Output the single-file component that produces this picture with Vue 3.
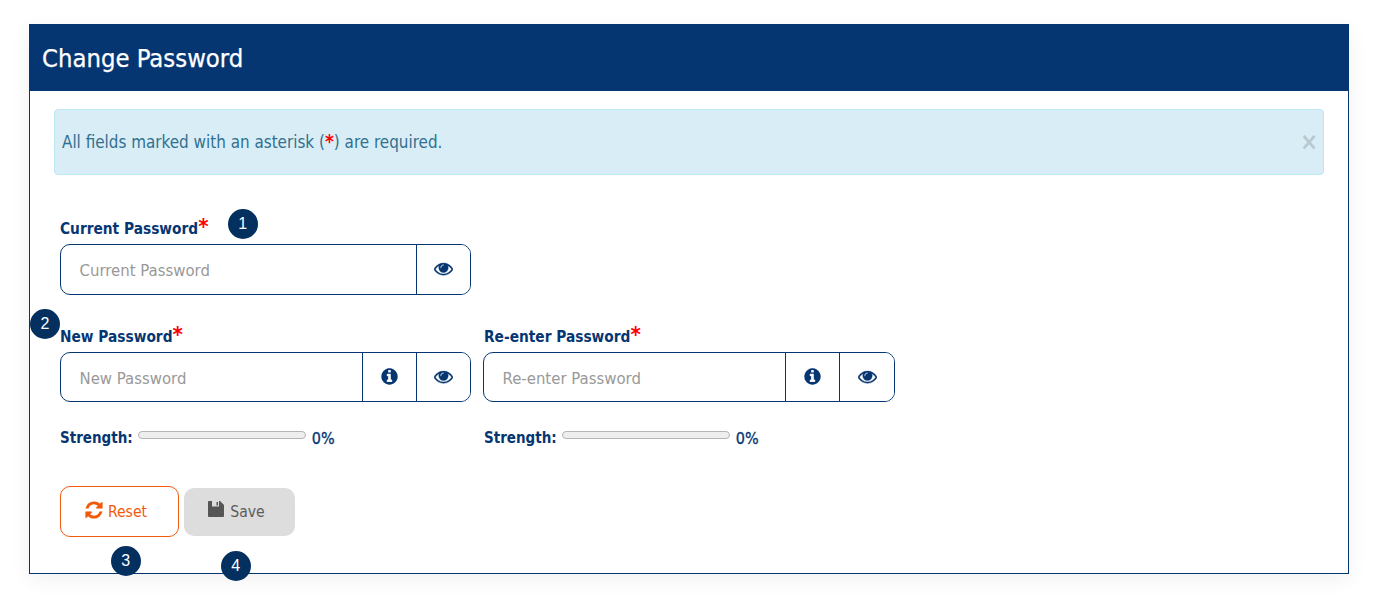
<script setup>
const eye = 'M1664 960q-152-236-381-353 61 104 61 225 0 185-131.5 316.5t-316.5 131.5-316.5-131.5-131.5-316.5q0-121 61-225-229 117-381 353 133 205 333.5 326.5t434.5 121.5 434.5-121.5 333.5-326.5zm-720-384q0-20-14-34t-34-14q-125 0-214.5 89.5t-89.5 214.5q0 20 14 34t34 14 34-14 14-34q0-86 61-147t147-61q20 0 34-14t14-34zm848 384q0 34-20 69-140 230-376.5 368.5t-499.5 138.5-499.5-139-376.5-368q-20-35-20-69t20-69q140-229 376.5-368t499.5-139 499.5 139 376.5 368q20 35 20 69z'
const info = 'M1152 1376v-160q0-14-9-23t-23-9h-96v-512q0-14-9-23t-23-9h-320q-14 0-23 9t-9 23v160q0 14 9 23t23 9h96v320h-96q-14 0-23 9t-9 23v160q0 14 9 23t23 9h448q14 0 23-9t9-23zm-128-896v-160q0-14-9-23t-23-9h-192q-14 0-23 9t-9 23v160q0 14 9 23t23 9h192q14 0 23-9t9-23zm640 416q0 209-103 385.5t-279.5 279.5-385.5 103-385.5-103-279.5-279.5-103-385.5 103-385.5 279.5-279.5 385.5-103 385.5 103 279.5 279.5 103 385.5z'
const refresh = 'M1639 1056q0 5-1 7-64 268-268 434.5t-478 166.5q-146 0-282.5-55t-243.5-157l-129 129q-19 19-45 19t-45-19-19-45v-448q0-26 19-45t45-19h448q26 0 45 19t19 45-19 45l-137 137q71 66 161 102t187 36q134 0 250-65t186-179q11-17 53-117 8-23 30-23h192q13 0 22.5 9.5t9.5 22.5zm25-800v448q0 26-19 45t-45 19h-448q-26 0-45-19t-19-45 19-45l138-138q-148-137-349-137-134 0-250 65t-186 179q-11 17-53 117-8 23-30 23h-199q-13 0-22.5-9.5t-9.5-22.5v-7q65-268 270-434.5t480-166.5q146 0 284 55.5t245 156.5l130-129q19-19 45-19t45 19 19 45z'
const floppy = 'M1 0h11l4 4v11a1 1 0 0 1-1 1H1a1 1 0 0 1-1-1V1a1 1 0 0 1 1-1zM4 0v5.500h7V0zM8.500 1v3.500H10V1z'
const pair = [
  { label: 'New Password', placeholder: 'New Password' },
  { label: 'Re-enter Password', placeholder: 'Re-enter Password' }
]
</script>

<template>
  <div class="page">
    <section class="card">
      <header class="head"><h1>Change Password</h1></header>
      <div class="body">
        <div class="alert">
          <span>All fields marked with an asterisk (<b class="req">*</b>) are required.</span>
          <span class="close">×</span>
        </div>
        <form class="form" @submit.prevent>
          <div class="field single">
            <label>Current Password<b class="req">*</b></label>
            <div class="group tall">
              <input type="password" placeholder="Current Password" />
              <button type="button" class="addon eye"><svg viewBox="0 0 1792 1792"><path :d="eye" /></svg></button>
            </div>
            <span class="badge b1">1</span>
          </div>
          <div class="pair">
            <div v-for="f in pair" :key="f.label" class="field">
              <label>{{ f.label }}<b class="req">*</b></label>
              <div class="group">
                <input type="password" :placeholder="f.placeholder" />
                <button type="button" class="addon info"><svg viewBox="0 0 1792 1792"><path :d="info" /></svg></button>
                <button type="button" class="addon eye"><svg viewBox="0 0 1792 1792"><path :d="eye" /></svg></button>
              </div>
              <div class="strength">
                <span>Strength:</span>
                <span class="bar"></span>
                <span class="pct">0%</span>
              </div>
            </div>
            <span class="badge b2">2</span>
          </div>
          <div class="actions">
            <button type="button" class="btn reset"><svg viewBox="0 0 1792 1792"><path :d="refresh" /></svg>Reset</button>
            <button type="button" class="btn save"><svg viewBox="0 0 16 16"><path :d="floppy" fill-rule="evenodd" /></svg>Save</button>
            <span class="badge b3">3</span>
            <span class="badge b4">4</span>
          </div>
        </form>
      </div>
    </section>
  </div>
</template>

<style>
html, body { margin: 0; background: #fff; }
</style>

<style scoped>
.page {
  padding: 24px 42px 36px 29px;
  font-family: "DejaVu Sans Condensed", "DejaVu Sans", sans-serif;
}
.card {
  position: relative;
  height: 550px;
  box-sizing: border-box;
  border: 1px solid #063672;
  background: #fff;
  box-shadow: 0 6px 20px rgba(0, 0, 0, .06);
}
.head {
  margin: -1px -1px 0;
  height: 67px;
  box-sizing: border-box;
  display: flex;
  align-items: center;
  padding: 0 0 0 13px;
  background: #063672;
}
.head h1 {
  margin: 0;
  font-size: 25.4px;
  font-weight: 400;
  color: #fff;
  -webkit-text-stroke: .25px #fff;
}
.body { padding: 18px 24px 0; }
.alert {
  height: 66px;
  box-sizing: border-box;
  display: flex;
  align-items: center;
  justify-content: space-between;
  padding: 0 5px 0 7px;
  border: 1px solid #bce8f1;
  border-radius: 4px;
  background: #d9edf7;
  color: #31708f;
  font-size: 16.9px;
}
.close { font-size: 24px; line-height: 24px; font-weight: 700; color: #000; opacity: .15; }
.req { color: #f00; font-weight: 700; }
.alert .req { font-size: 19px; line-height: 16px; }
.form { padding: 0 0 0 6px; margin-top: 43px; }
.field { position: relative; }
.single { width: 411px; position: static; }
label {
  display: block;
  height: 17px;
  line-height: 17px;
  margin-bottom: 9px;
  font-size: 15.3px;
  font-weight: 700;
  color: #063672;
}
label .req { font-size: 22px; line-height: 17px; }
.group {
  display: flex;
  height: 50px;
  box-sizing: border-box;
  border: 1px solid #063672;
  border-radius: 10px;
  overflow: hidden;
}
.group.tall { height: 51px; }
.group input {
  flex: 1;
  min-width: 0;
  border: 0;
  outline: 0;
  padding: 2px 0 0 18.500px;
  font: 16.6px "DejaVu Sans Condensed", "DejaVu Sans", sans-serif;
  background: transparent;
}
.group input::placeholder { color: #999; opacity: 1; }
.addon {
  width: 54px;
  flex: none;
  padding: 0 0 1px;
  border: 0;
  border-left: 1px solid #063672;
  background: #fff;
  display: flex;
  align-items: center;
  justify-content: center;
}
.tall .addon { padding-bottom: 3px; }
.addon svg { fill: #063672; stroke: #063672; }
.eye svg { width: 19px; height: 19px; stroke-width: 35; }
.info svg { width: 19px; height: 19px; stroke-width: 10; }
.pair {
  position: relative;
  display: grid;
  grid-template-columns: 411px 412px;
  column-gap: 12px;
  margin-top: 31px;
}
.pair .field:nth-child(2) .eye { width: 55px; }
.pair .field:nth-child(2) label,
.pair .field:nth-child(2) .strength { padding-left: 1px; }
.strength {
  display: flex;
  align-items: center;
  margin-top: 27px;
  height: 18px;
  font-size: 15px;
  font-weight: 700;
  color: #063672;
}
.pct { font-size: 16px; font-weight: 400; -webkit-text-stroke: .3px #063672; }
.bar {
  width: 168px;
  height: 8px;
  box-sizing: border-box;
  margin: 0 6px 6px 5px;
  border: 1px solid #b5b5b5;
  border-radius: 4px;
  background: #eee;
}
.actions {
  position: relative;
  display: flex;
  align-items: center;
  gap: 5px;
  margin-top: 39px;
}
.btn {
  display: flex;
  align-items: center;
  justify-content: center;
  font: 15.6px "DejaVu Sans Condensed", "DejaVu Sans", sans-serif;
  box-sizing: border-box;
}
.reset {
  width: 119px;
  height: 51px;
  padding: 0 8px 0 0;
  gap: 4px;
  border: 1px solid #f05a0a;
  border-radius: 10px;
  background: #fff;
  color: #f05a0a;
}
.reset svg { width: 20px; height: 20px; fill: #f05a0a; stroke: #f05a0a; stroke-width: 10; margin-top: -4px; }
.save {
  width: 111px;
  height: 48px;
  padding: 0 6px 0 0;
  gap: 6px;
  border: 0;
  border-radius: 10px;
  background: #ddd;
  color: #5c5c5c;
}
.save svg { width: 16px; height: 16px; fill: #555; margin-top: -5px; }
.badge {
  position: absolute;
  width: 30px;
  height: 30px;
  border-radius: 50%;
  background: #03305f;
  color: #fff;
  font: 16px/30px "Liberation Sans", sans-serif;
  text-align: center;
}
.b1 { left: 197.700px; top: 184px; }
.b2 { left: -30px; top: -17px; }
.b3 { left: 50.700px; top: 60px; }
.b4 { left: 160.700px; top: 65px; }
</style>
